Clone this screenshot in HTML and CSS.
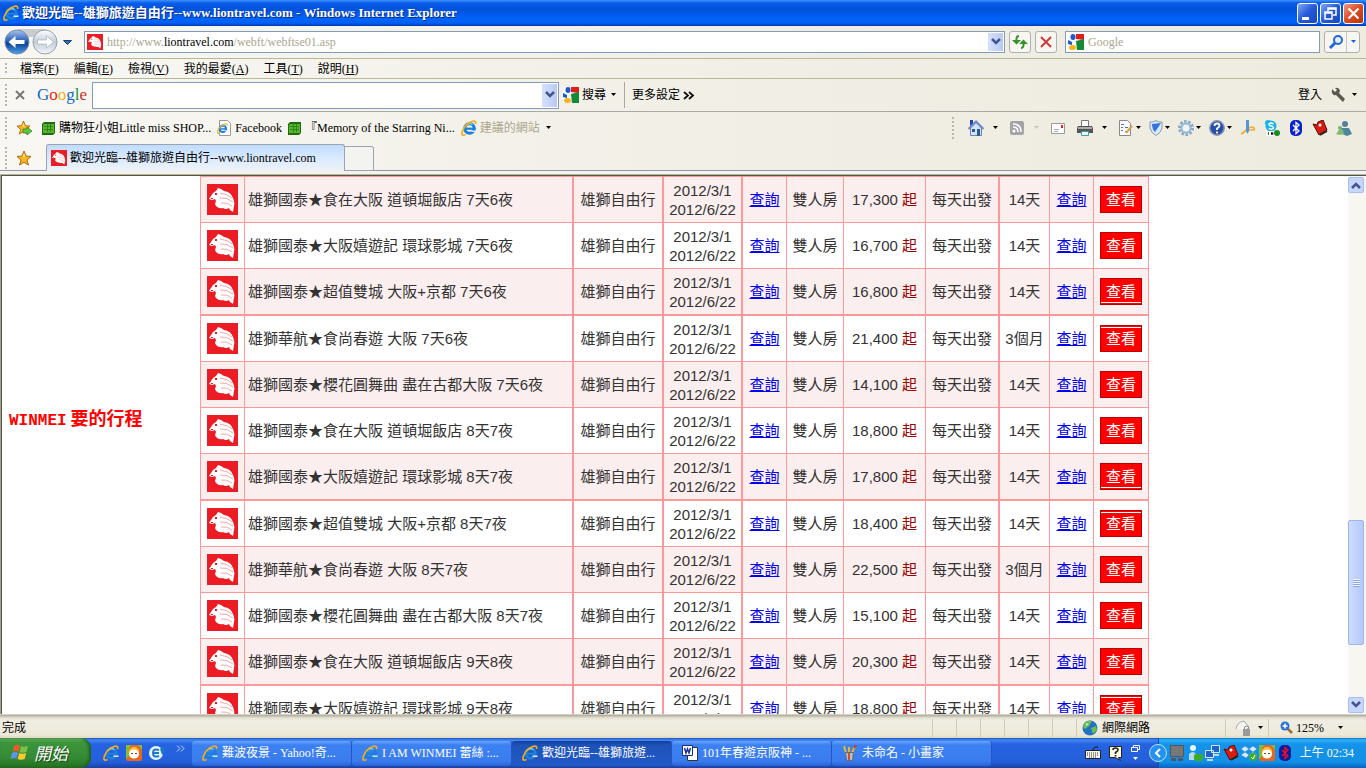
FILE: index.html
```html
<!DOCTYPE html>
<html lang="zh-Hant">
<head>
<meta charset="utf-8">
<title>歡迎光臨--雄獅旅遊自由行--www.liontravel.com</title>
<link rel="stylesheet" href="styles.css">
</head>
<body>
<svg class="defs" width="0" height="0" aria-hidden="true">
  <linearGradient id="blueBall" x1="0" y1="0" x2="0" y2="1"><stop offset="0" stop-color="#a9c6ee"/><stop offset=".45" stop-color="#2a62bd"/><stop offset=".55" stop-color="#0d3f94"/><stop offset="1" stop-color="#4aa6ee"/></linearGradient>
  <linearGradient id="grayBall" x1="0" y1="0" x2="0" y2="1"><stop offset="0" stop-color="#fff"/><stop offset=".5" stop-color="#c3ccd8"/><stop offset="1" stop-color="#f4f8fc"/></linearGradient>
  <symbol id="lion" viewBox="0 0 31 31"><rect width="31" height="31" fill="#ec1c24"/><path fill="#fff" d="M2 15L6 9l3-2 2-3 3 1 3 2q7 1 9 7 2 5 1 8l-1 6-3-2-1-2q-3 2-6 0-4 1-7-2l-1-2 1-3-1-2-3 1-1 3H4l1-3z"/><path fill="none" stroke="#f6a9a4" d="M13 9q8 1 12 5M13 14q7-1 13 4M14 19q6-1 11 3"/><path fill="#ec1c24" d="M8 9h2v2H8zM4 14h2v1H4z"/></symbol>
  <symbol id="ie" viewBox="0 0 16 16"><circle cx="8.500" cy="8.500" r="4.700" fill="none" stroke="#1c7fdc" stroke-width="3"/><path d="M5 8.700h9.500" stroke="#1c7fdc" stroke-width="2.200"/><path d="M10.500 10.500h5v1.500h-5z" fill="#d9eaff"/><path d="M5 5.500Q8 2.500 11.500 4.500" fill="none" stroke="#8fd0ff" stroke-width="1.200"/><path d="M14.500 4Q15.500 0 11 1.500 4 4 1.500 11-.5 16.500 4.500 14.500" fill="none" stroke="#f0ae1c" stroke-width="1.700"/></symbol>
  <symbol id="goog" viewBox="0 0 16 16"><path fill="#f4f8ff" d="M0 0h9v16H0z"/><path fill="#e21b1b" d="M8 0h8v6l-8-1z"/><path fill="#138a36" d="M8 7l8-2v11H9z"/><path fill="#1f58c7" d="M0 6l4 2v3l-4-1z"/><ellipse cx="5" cy="3" rx="2.500" ry="3" fill="#1f58c7"/><ellipse cx="4.500" cy="13.500" rx="3.500" ry="2.500" fill="#f8b414"/></symbol>
  <symbol id="green" viewBox="0 0 13 13"><path fill="#1e6b10" d="M2 0h11v11l-2 2H0V2z"/><path fill="#58b531" d="M2 2h10v9H1V3z"/><path stroke="#2e8518" d="M2 4.500h9M2 7.500h9M5.500 2v8M8.500 2v8"/></symbol>
  <symbol id="star" viewBox="0 0 16 16"><path fill="#fbb81e" stroke="#b06a10" d="M8 1l2 5 5 .5-4 3.500 1.500 5L8 12.300 3.500 15 5 10 1 6.500 6 6z"/><path fill="#ffe792" d="M8 3l1.300 4H6.500z"/></symbol>
  <symbol id="caret" viewBox="0 0 7 4"><path fill="currentColor" d="M1 0h5L3.500 3z"/></symbol>
  <symbol id="chev" viewBox="0 0 10 8"><path d="M1 1l4 4 4-4" fill="none" stroke="#44568a" stroke-width="2.500"/></symbol>
  <symbol id="face" viewBox="0 0 16 16"><rect width="16" height="16" rx="2" fill="#e8671b"/><path fill="#86bb35" d="M0 0h5L3 4v8l-3 2zM12 0h4v5z"/><path fill="#f9bd3c" d="M3 5l3-3h4l3 3v3H3z"/><ellipse cx="8" cy="9" rx="5" ry="4.500" fill="#fff"/><path fill="#742" d="M5 8h2v1H5zM9 8h2v1H9z"/></symbol>
  <symbol id="bt" viewBox="0 0 12 16"><rect width="12" height="16" rx="5" fill="#0a22cf"/><path d="M3 5l6 6-3 2.500v-11L9 5l-6 6" fill="none" stroke="#fff" stroke-width="1.300"/></symbol>
  <symbol id="book" viewBox="0 0 16 16"><path fill="#d91c12" stroke="#5b0a05" d="M1 4l4 1 1-3 5-2 4 10-8 5z"/><path d="M8 15l7-4" stroke="#222" stroke-width="2"/><circle cx="8" cy="5" r="1.500" fill="#fff"/></symbol>
</svg>

<header class="titlebar">
  <svg class="i16"><use href="#ie"/></svg>
  <h1>歡迎光臨--雄獅旅遊自由行--www.liontravel.com - Windows Internet Explorer</h1>
  <div class="winbtns">
    <button aria-label="最小化"><svg viewBox="0 0 19 19"><path fill="#fff" d="M4 13h7v3H4z"/></svg></button>
    <button aria-label="還原"><svg viewBox="0 0 19 19"><path fill="none" stroke="#fff" stroke-width="1.500" d="M7 7V4h8v7h-3M4 8h7v7H4zM4 9h7M7 5h8"/></svg></button>
    <button class="close" aria-label="關閉"><svg viewBox="0 0 19 19"><path stroke="#fff" stroke-width="2.300" d="M4.500 4.500l10 10M14.500 4.500l-10 10"/></svg></button>
  </div>
</header>

<nav class="navrow">
  <svg class="travel" viewBox="0 0 72 30" role="img" aria-label="上一頁 下一頁"><path fill="#c8cbd0" d="M14 2h28v8H14z"/><circle cx="13" cy="15" r="12" fill="url(#blueBall)" stroke="#7c8ba6"/><path fill="#fff" d="M4.500 15l7-6v4h9v4h-9v4z"/><circle cx="41" cy="15" r="12" fill="url(#grayBall)" stroke="#9aa0aa"/><path fill="#fff" stroke="#aab2be" stroke-width=".7" d="M49.500 15l-7-6v4h-9v4h9v4z"/><path fill="#2673b8" stroke="#17406e" d="M59.500 13.500h8l-4 4z"/></svg>
  <div class="field address"><svg class="i16"><use href="#lion"/></svg>
    <div class="url" role="textbox" aria-label="網址" contenteditable="true" spellcheck="false">http://www.<b>liontravel.com</b>/webft/webftse01.asp</div>
    <button class="drop" aria-label="展開網址"><svg width="10" height="8"><use href="#chev"/></svg></button></div>
  <button class="sq" aria-label="重新整理"><svg class="i16" viewBox="0 0 16 16"><path fill="none" stroke="#35912c" stroke-width="2" d="M7 2Q4 2 4.500 7M9 14q3 0 2.500-5"/><path fill="#35912c" d="M0 6h9l-4.500 4.500zM7 10h9l-4.500-4.500z"/></svg></button>
  <button class="sq" aria-label="停止"><svg class="i16" viewBox="0 0 16 16"><path stroke="#d03a35" stroke-width="2" d="M3 3l10 10M13 3L3 13"/></svg></button>
  <div class="field search"><svg class="i16"><use href="#goog"/></svg><input type="text" aria-label="搜尋" placeholder="Google"></div>
  <div class="go"><button aria-label="開始搜尋"><svg class="i16" viewBox="0 0 16 16"><circle cx="10" cy="6" r="4" fill="#e4f0ff" stroke="#2367d8" stroke-width="2"/><path d="M7 9l-5 5" stroke="#2367d8" stroke-width="3"/></svg></button><button class="more" aria-label="搜尋選項"><svg class="caret"><use href="#caret"/></svg></button></div>
</nav>

<nav class="menurow">
  <i class="grip"></i>
  <button>檔案(<u>F</u>)</button><button>編輯(<u>E</u>)</button><button>檢視(<u>V</u>)</button><button>我的最愛(<u>A</u>)</button><button>工具(<u>T</u>)</button><button>說明(<u>H</u>)</button>
</nav>

<div class="googlerow">
  <i class="grip"></i>
  <button class="x" aria-label="關閉工具列"><svg width="10" height="10" viewBox="0 0 10 10"><path stroke="#777" stroke-width="2" d="M1 1l8 8M9 1L1 9"/></svg></button>
  <span class="glogo"><span class="b">G</span><span class="r">o</span><span class="y">o</span><span class="b">g</span><span class="g">l</span><span class="r">e</span></span>
  <div class="field gfield"><input type="text" aria-label="Google 搜尋"><button class="drop" aria-label="展開"><svg width="10" height="8"><use href="#chev"/></svg></button></div>
  <button class="gbtn"><svg class="i16"><use href="#goog"/></svg>搜尋<svg class="caret"><use href="#caret"/></svg></button>
  <i class="vsep"></i>
  <button class="gbtn">更多設定<svg width="12" height="9" viewBox="0 0 12 9"><path d="M1 1l4 3.500L1 8M6 1l4 3.500L6 8" fill="none" stroke="#111" stroke-width="1.800"/></svg></button>
  <button class="push">登入</button>
  <button class="wrench" aria-label="設定"><svg class="i16" viewBox="0 0 16 16"><path fill="#59594f" d="M2 2l3 3 2-2-2-2q4-1 5 3l-1 2 6 6-2 3-7-7Q1 9 2 2z"/></svg><svg class="caret"><use href="#caret"/></svg></button>
</div>

<div class="favrow">
  <i class="grip"></i>
  <button class="addfav" aria-label="新增至我的最愛列"><svg class="i16" viewBox="0 0 16 16"><use href="#star" width="15" height="15"/><path fill="#5fc73b" stroke="#2d7d1a" stroke-width=".7" d="M7 9h4V7l5 4-5 4v-2H7z"/></svg></button>
  <a href="#"><svg class="i13"><use href="#green"/></svg>購物狂小姐Little miss SHOP...</a>
  <a href="#"><svg width="14" height="16" viewBox="0 0 14 16"><path fill="#fff" stroke="#999" d="M2.500.5h8l3 3v12h-11z"/><use href="#ie" x="0" y="3" width="11" height="11"/></svg>Facebook</a>
  <a href="#"><svg class="i13"><use href="#green"/></svg>『Memory of the Starring Ni...</a>
  <a href="#" class="sites"><svg class="i16"><use href="#ie"/></svg>建議的網站<svg class="caret"><use href="#caret"/></svg></a>
  <div class="tools">
    <i class="grip"></i>
    <button class="wide" aria-label="首頁"><svg class="i16" viewBox="0 0 16 16"><path fill="#1e3fae" d="M2 0h3v4L2 6z"/><path fill="#d3e3f6" stroke="#6a83b8" d="M2.500 8L8 2.500 13.500 8v7.500h-11z"/><path fill="none" stroke="#7388c8" stroke-width="2" d="M.5 9L8 1.500 15.500 9"/><path fill="#2e5a8f" d="M9 9h3v7H9zM4 9h3v3H4z"/></svg><svg class="caret"><use href="#caret"/></svg></button>
    <button class="wide dim" aria-label="摘要"><svg class="i16" viewBox="0 0 16 16"><rect x="1" y="1" width="14" height="14" rx="2" fill="#a4a4a4"/><circle cx="5" cy="11" r="1.500" fill="#fff"/><path d="M4 7q5 0 5 5M4 4q8 0 8 8" fill="none" stroke="#fff" stroke-width="1.500"/></svg><svg class="caret"><use href="#caret"/></svg></button>
    <button class="mail" aria-label="郵件"><svg class="i16" viewBox="0 0 16 16"><path fill="#fff" stroke="#999" d="M1.500 3.500h13v10h-13z"/><path fill="#d22" d="M11 5h2v3h-2z"/><path stroke="#aaa" d="M4 9.500h5M4 11.500h4"/></svg></button>
    <button class="wide" aria-label="列印"><svg class="i16" viewBox="0 0 16 16"><path fill="#fff" stroke="#777" d="M4.500.5h7v6h-7z"/><path fill="#555" d="M1 6h14l1 2v5H0V8z"/><path fill="#aaa" d="M1 7h14v2H1z"/><path fill="#e8f8ff" stroke="#49a" d="M4.500 11.500h7v4h-7z"/></svg><svg class="caret"><use href="#caret"/></svg></button>
    <button class="tight" aria-label="網頁"><svg class="i16" viewBox="0 0 16 16"><path fill="#fff" stroke="#888" d="M1.500.5h8l3 3v12h-11z"/><path stroke="#5b6fae" d="M3 4.500h3M3 7.500h2M7 7.500h3M3 10.500h2M7 11.500h2"/><path d="M8 13l6-7" stroke="#d9a243" stroke-width="2"/></svg><svg class="caret"><use href="#caret"/></svg></button>
    <button class="tight" aria-label="安全性"><svg class="i14" viewBox="0 0 14 16"><path fill="#dce9fa" stroke="#8a9cb8" d="M7 .5q3 2 6 1.500v6q-1 5-6 7.500-5-2.500-6-7.500V2q3 .5 6-1.500z"/><path fill="#3274df" d="M3 4l9-1-6 9q-3-3-3-8z"/></svg><svg class="caret"><use href="#caret"/></svg></button>
    <button class="tight" aria-label="工具"><svg class="i16" viewBox="0 0 16 16"><circle cx="8" cy="8" r="6.500" fill="none" stroke="#8fa8c0" stroke-width="3" stroke-dasharray="2.500 1.500"/><circle cx="8" cy="8" r="4.500" fill="#f4f3ec" stroke="#8fbbe0" stroke-width="2"/></svg><svg class="caret"><use href="#caret"/></svg></button>
    <button class="tight" aria-label="說明"><svg class="i16" viewBox="0 0 16 16"><circle cx="8" cy="8" r="7.200" fill="#294ea8" stroke="#8996b6" stroke-width="1.500"/><path d="M5.500 6q0-2.500 2.500-2.500t2.500 2q0 1.500-2.500 3V10M8 11.500v2" fill="none" stroke="#fff" stroke-width="1.800"/></svg><svg class="caret"><use href="#caret"/></svg></button>
    <button class="one" aria-label="編輯"><svg class="i16" viewBox="0 0 16 16"><path d="M1 14q4-2 5-4h7q2 0 1-2-2-2-5 0" fill="none" stroke="#f0ac39" stroke-width="1.700"/><path fill="#5496d8" d="M6 0h3v11l-1.500 3L6 11z"/></svg></button>
    <button class="one" aria-label="Skype"><svg class="i16" viewBox="0 0 16 16"><circle cx="7" cy="6" r="5.500" fill="#19b4ea"/><circle cx="4" cy="3" r="3" fill="#19b4ea"/><path d="M9.500 4Q7 2 5 4q0 2 3 2 3 2 0 3-2 1-3-1" fill="none" stroke="#fff" stroke-width="1.500"/><path fill="#fff" d="M2 11h9v5H2z"/><path stroke="#555" d="M4.500 12v3M7 12.500h2v2H7"/><circle cx="13" cy="13" r="3" fill="#178a24"/></svg></button>
    <button class="one" aria-label="Bluetooth"><svg class="i16"><use href="#bt"/></svg></button>
    <button class="one" aria-label="字典"><svg class="i16"><use href="#book"/></svg></button>
    <button class="one" aria-label="Messenger"><svg class="i16" viewBox="0 0 16 16"><circle cx="9" cy="4" r="3" fill="#567f9e"/><path fill="#4d8698" d="M5 8h8l3 6-5 2-5-2z"/><circle cx="4" cy="8" r="2" fill="#73b56b"/><path fill="#86b976" d="M0 14l3-4h4l1 4-4 1z"/></svg></button>
  </div>
</div>

<div class="tabrow">
  <i class="grip"></i>
  <button class="favstar" aria-label="我的最愛"><svg class="i16"><use href="#star"/></svg></button>
  <button class="tab"><svg class="i16"><use href="#lion"/></svg>歡迎光臨--雄獅旅遊自由行--www.liontravel.com</button>
  <button class="newtab" aria-label="新索引標籤"></button>
</div>

<main class="viewport">
  <div class="page">
    <p class="note">WINMEI<span>要的行程</span></p>
    <table class="tours">
      <colgroup><col class="c-logo"><col class="c-name"><col class="c-type"><col class="c-date"><col class="c-ask"><col class="c-room"><col class="c-price"><col class="c-go"><col class="c-days"><col class="c-link"><col class="c-view"></colgroup>
      <tbody>
      <tr><td><svg class="i31"><use href="#lion"/></svg></td><td class="name">雄獅國泰★食在大阪 道頓堀飯店 7天6夜</td><td>雄獅自由行</td><td>2012/3/1<br>2012/6/22</td><td><a href="#">查詢</a></td><td>雙人房</td><td>17,300 <em>起</em></td><td>每天出發</td><td>14天</td><td><a href="#">查詢</a></td><td><button>查看</button></td></tr>
      <tr><td><svg class="i31"><use href="#lion"/></svg></td><td class="name">雄獅國泰★大阪嬉遊記 環球影城 7天6夜</td><td>雄獅自由行</td><td>2012/3/1<br>2012/6/22</td><td><a href="#">查詢</a></td><td>雙人房</td><td>16,700 <em>起</em></td><td>每天出發</td><td>14天</td><td><a href="#">查詢</a></td><td><button>查看</button></td></tr>
      <tr><td><svg class="i31"><use href="#lion"/></svg></td><td class="name">雄獅國泰★超值雙城 大阪+京都 7天6夜</td><td>雄獅自由行</td><td>2012/3/1<br>2012/6/22</td><td><a href="#">查詢</a></td><td>雙人房</td><td>16,800 <em>起</em></td><td>每天出發</td><td>14天</td><td><a href="#">查詢</a></td><td><button class="low">查看</button></td></tr>
      <tr class="group"><td><svg class="i31"><use href="#lion"/></svg></td><td class="name">雄獅華航★食尚春遊 大阪 7天6夜</td><td>雄獅自由行</td><td>2012/3/1<br>2012/6/22</td><td><a href="#">查詢</a></td><td>雙人房</td><td>21,400 <em>起</em></td><td>每天出發</td><td>3個月</td><td><a href="#">查詢</a></td><td><button class="high">查看</button></td></tr>
      <tr><td><svg class="i31"><use href="#lion"/></svg></td><td class="name">雄獅國泰★櫻花圓舞曲 盡在古都大阪 7天6夜</td><td>雄獅自由行</td><td>2012/3/1<br>2012/6/22</td><td><a href="#">查詢</a></td><td>雙人房</td><td>14,100 <em>起</em></td><td>每天出發</td><td>14天</td><td><a href="#">查詢</a></td><td><button>查看</button></td></tr>
      <tr><td><svg class="i31"><use href="#lion"/></svg></td><td class="name">雄獅國泰★食在大阪 道頓堀飯店 8天7夜</td><td>雄獅自由行</td><td>2012/3/1<br>2012/6/22</td><td><a href="#">查詢</a></td><td>雙人房</td><td>18,800 <em>起</em></td><td>每天出發</td><td>14天</td><td><a href="#">查詢</a></td><td><button>查看</button></td></tr>
      <tr><td><svg class="i31"><use href="#lion"/></svg></td><td class="name">雄獅國泰★大阪嬉遊記 環球影城 8天7夜</td><td>雄獅自由行</td><td>2012/3/1<br>2012/6/22</td><td><a href="#">查詢</a></td><td>雙人房</td><td>17,800 <em>起</em></td><td>每天出發</td><td>14天</td><td><a href="#">查詢</a></td><td><button class="low">查看</button></td></tr>
      <tr class="group"><td><svg class="i31"><use href="#lion"/></svg></td><td class="name">雄獅國泰★超值雙城 大阪+京都 8天7夜</td><td>雄獅自由行</td><td>2012/3/1<br>2012/6/22</td><td><a href="#">查詢</a></td><td>雙人房</td><td>18,400 <em>起</em></td><td>每天出發</td><td>14天</td><td><a href="#">查詢</a></td><td><button class="high">查看</button></td></tr>
      <tr><td><svg class="i31"><use href="#lion"/></svg></td><td class="name">雄獅華航★食尚春遊 大阪 8天7夜</td><td>雄獅自由行</td><td>2012/3/1<br>2012/6/22</td><td><a href="#">查詢</a></td><td>雙人房</td><td>22,500 <em>起</em></td><td>每天出發</td><td>3個月</td><td><a href="#">查詢</a></td><td><button>查看</button></td></tr>
      <tr><td><svg class="i31"><use href="#lion"/></svg></td><td class="name">雄獅國泰★櫻花圓舞曲 盡在古都大阪 8天7夜</td><td>雄獅自由行</td><td>2012/3/1<br>2012/6/22</td><td><a href="#">查詢</a></td><td>雙人房</td><td>15,100 <em>起</em></td><td>每天出發</td><td>14天</td><td><a href="#">查詢</a></td><td><button>查看</button></td></tr>
      <tr><td><svg class="i31"><use href="#lion"/></svg></td><td class="name">雄獅國泰★食在大阪 道頓堀飯店 9天8夜</td><td>雄獅自由行</td><td>2012/3/1<br>2012/6/22</td><td><a href="#">查詢</a></td><td>雙人房</td><td>20,300 <em>起</em></td><td>每天出發</td><td>14天</td><td><a href="#">查詢</a></td><td><button>查看</button></td></tr>
      <tr class="group"><td><svg class="i31"><use href="#lion"/></svg></td><td class="name">雄獅國泰★大阪嬉遊記 環球影城 9天8夜</td><td>雄獅自由行</td><td>2012/3/1<br>2012/6/22</td><td><a href="#">查詢</a></td><td>雙人房</td><td>18,800 <em>起</em></td><td>每天出發</td><td>14天</td><td><a href="#">查詢</a></td><td><button class="high">查看</button></td></tr>
      </tbody>
    </table>
  </div>
  <div class="scroll">
    <button class="up" aria-label="向上捲動"><svg width="10" height="8"><use href="#chev"/></svg></button>
    <div class="track"><div class="before"></div><div class="thumb"><i></i></div><div class="after"></div></div>
    <button aria-label="向下捲動"><svg width="10" height="8"><use href="#chev"/></svg></button>
  </div>
</main>

<footer class="status">
  <span class="done">完成</span>
  <div class="cells"><i></i><i></i><i></i><i></i><i></i><i></i></div>
  <div class="zone"><svg class="i16" viewBox="0 0 16 16"><circle cx="8" cy="8" r="7.500" fill="#2271c4"/><path fill="#6cbf4a" d="M3 2q4-2 7-1L7 6l-4 3-2-2zM9 8l5-2 1 4-4 4z"/><path fill="#bfe3f7" d="M4 3l3 1-3 2z"/></svg>網際網路</div>
  <div class="protect"><svg class="i16" viewBox="0 0 16 16"><path fill="#f4f4f0" stroke="#aaa" d="M1 9q1-7 8-8l5 6-3 3"/><path fill="#999" d="M8 9h7v7H8z"/><path d="M9.500 9V7q2-2 4 0v2" fill="none" stroke="#888"/></svg><svg class="caret"><use href="#caret"/></svg></div>
  <button class="zoom"><svg class="i13" viewBox="0 0 13 13"><path d="M8 8l4 4" stroke="#a66a2c" stroke-width="2.500"/><circle cx="5" cy="5" r="4.500" fill="#2873cf"/><path stroke="#fff" stroke-width="1.500" d="M2.500 5h5M5 2.500v5"/></svg>125%<svg class="caret"><use href="#caret"/></svg></button>
</footer>

<div class="taskbar">
  <button class="start"><svg width="20" height="18" viewBox="0 0 20 18"><path fill="#ec5c2a" d="M4 2q3-2 6-.5L8.500 7.500Q5 6.500 2.500 8z"/><path fill="#7dc142" d="M11 2q3 1.500 7 0L16.500 8q-4 1.500-7 0z"/><path fill="#5c92ee" d="M2 9q3-1.500 6-.5L6.500 14.500q-3-1-6 .5z"/><path fill="#fbc92d" d="M9.200 9q3 1.500 7 0l-1.500 6q-4 1.500-7 0z"/></svg>開始</button>
  <div class="quick">
    <svg class="i16"><use href="#ie"/></svg><svg class="i16"><use href="#face"/></svg>
    <svg class="i16" viewBox="0 0 16 16"><circle cx="7" cy="8" r="7" fill="#e8f4ff"/><path d="M10 5q-6-2-6 3t6 3M5 8h5" fill="none" stroke="#1c78c8" stroke-width="2"/><path fill="#1c78c8" d="M11 4l3-3 2 5-3 4z"/></svg>
    <svg class="more" width="9" height="7" viewBox="0 0 9 7"><path d="M1 .5l3 3-3 3M5 .5l3 3-3 3" fill="none" stroke="#c5dbff"/></svg>
  </div>
  <div class="tasks">
    <button><svg class="i16"><use href="#ie"/></svg><span>難波夜景 - Yahoo!奇...</span></button>
    <button><svg class="i16"><use href="#ie"/></svg><span>I AM WINMEI 蕾絲 :...</span></button>
    <button class="on"><svg class="i16"><use href="#ie"/></svg><span>歡迎光臨--雄獅旅遊...</span></button>
    <button><svg class="i16" viewBox="0 0 16 16"><path fill="#fff" stroke="#333" d="M5.500 2.500h10v13h-10z"/><path fill="#fff" stroke="#1b2f7d" d="M.5.500h10v10H.5z"/><path d="M2.500 3l1.500 5 1.500-4L7 8l1.500-5" fill="none" stroke="#1b2f9d" stroke-width="1.500"/></svg><span>101年春遊京阪神 - ...</span></button>
    <button><svg class="i16" viewBox="0 0 16 16"><path d="M4 8L2 1M7 8V2M10 8l3-7" stroke="#e9b52b" stroke-width="2"/><path d="M12 3l2-3" stroke="#d4331d" stroke-width="2"/><path fill="#b5bfc4" stroke="#667" d="M3.500 7.500h8l-1 8h-6z"/><path fill="#c9512e" d="M6 8h2v7H6z"/></svg><span>未命名 - 小畫家</span></button>
  </div>
  <div class="lang">
    <svg class="i16" viewBox="0 0 16 16"><path d="M8 5q0-3 5-3" stroke="#111" fill="none"/><path fill="#f4f2e6" stroke="#222" d="M.5 5.500h15v8H.5z"/><path stroke="#333" stroke-dasharray="1 1" d="M2 8h12M2 10h12M4 12h8"/></svg>
    <svg class="i16" viewBox="0 0 16 16"><path fill="#fffbe0" stroke="#222" d="M1.500 1.500h12v11h-3l2 3-5-3h-6z"/><path d="M5 5q0-2 2.500-2T10 5q0 1-2.500 2.500V9M7.500 10v1.500" fill="none" stroke="#222" stroke-width="1.600"/></svg>
    <svg width="9" height="16" viewBox="0 0 9 16"><path fill="none" stroke="#fff" d="M2.500 2V.5h6v4H7M.5 2.500h6v4h-6z"/><path fill="#fff" d="M2 12h5l-2.500 3z"/></svg>
  </div>
  <div class="tray">
    <button class="hide" aria-label="隱藏圖示"><svg width="18" height="18" viewBox="0 0 18 18"><circle cx="9" cy="9" r="8.500" fill="#2292ee" stroke="#bfe0ff"/><path d="M11 5L7 9l4 4" fill="none" stroke="#fff" stroke-width="2"/></svg></button>
    <svg class="i16" viewBox="0 0 16 16"><path fill="#777" stroke="#555" d="M1.500.5h13v11h-13z"/><path fill="#555" d="M2 13h5v3H2zM9 13h5v3H9z"/></svg>
    <svg class="i16" viewBox="0 0 16 16"><circle cx="6" cy="3" r="3" fill="#eaf4fc"/><path fill="#b9d9ee" d="M2 15V9q4-4 7 0v6z"/><rect x="7" y="9" width="9" height="7" rx="2" fill="#3bab2c"/></svg>
    <svg class="i16" viewBox="0 0 16 16"><path fill="#1e62c9" stroke="#d5e6f7" d="M6.500.5h8v7h-8zM.5 5.500h8v7h-8z"/><path fill="#c3d2df" d="M9 9h5v2H9zM2 14h6v2H2z"/></svg>
    <svg class="i16"><use href="#book"/></svg>
    <svg class="i16" viewBox="0 0 16 16"><path fill="#d7ecff" stroke="#3c8fd6" stroke-width=".6" d="M4 1l4 3-4 3-4-3zM12 1l4 3-4 3-4-3zM4 7l4 3-3 3-5-3zM12 7l4 3-5 3-3-3z"/><circle cx="12" cy="12" r="4" fill="#3cae2c"/><path d="M10 12l2 2 2-4" fill="none" stroke="#fff"/></svg>
    <svg class="i16"><use href="#face"/></svg>
    <svg class="i16" viewBox="0 0 12 16"><rect width="12" height="16" rx="5" fill="#0a1a9f"/><path d="M3 5l6 6-3 2.500v-11L9 5l-6 6" fill="none" stroke="#e12" stroke-width="1.300"/></svg>
    <time>上午 02:34</time>
  </div>
</div>
</body>
</html>
```
FILE: styles.css
```css
* { box-sizing: border-box; }
body {
  margin: 0; height: 100vh; overflow: hidden; display: flex; flex-direction: column;
  font: 12px/16px "Liberation Serif", "Noto Sans CJK TC", serif; color: #000; background: #f1efe6;
}
button, input { font: inherit; color: inherit; border: 0; padding: 0; margin: 0; background: none; }
button { display: inline-flex; align-items: center; white-space: nowrap; }
a { color: inherit; text-decoration: none; }
svg { flex: none; display: block; }
.defs { position: absolute; }
.i16 { width: 16px; height: 16px; }
.i14 { width: 14px; height: 16px; }
.i13 { width: 13px; height: 13px; }
.i31 { width: 31px; height: 31px; margin: 0 auto; }
.caret { width: 7px; height: 4px; }
.grip { flex: none; width: 2px; height: 22px; background: repeating-linear-gradient(#b9b6a4 0 2px, transparent 2px 4px); }

.titlebar {
  flex: none; height: 26px; padding: 0 2px 0 3px; display: flex; align-items: center; gap: 3px;
  background: linear-gradient(#3f93ff 0, #0a5cea 3px, #0052dc 10px, #0064fb 20px, #0060f4 23px, #0038b4);
}
h1 { margin: 0; flex: 1; font-size: 13px; line-height: 18px; font-weight: 700; color: #fff; text-shadow: 1px 1px #0a2a80; white-space: nowrap; overflow: hidden; }
.winbtns { display: flex; gap: 2px; }
.winbtns button { width: 21px; height: 21px; border: 1px solid #fff; border-radius: 3px; background: linear-gradient(135deg, #7fa6f4, #2459d8 50%, #1a48c0); }
.winbtns .close { background: linear-gradient(135deg, #f09a80, #dc4a22 50%, #b83208); }
.winbtns svg { width: 19px; height: 19px; }

.navrow, .menurow, .googlerow, .favrow, .tabrow { flex: none; display: flex; align-items: center; background: linear-gradient(to right, #f8f7f3, #f1efe6 50%, #eeebdf); }
.navrow { height: 33px; padding: 0 6px 0 4px; border-bottom: 1px solid #b9b795; }
.travel { width: 72px; height: 30px; margin-right: 8px; }
.field { display: flex; align-items: center; height: 22px; border: 1px solid #7f9db9; background: #fff; }
.address { flex: 1; padding: 0 1px 0 2px; gap: 4px; margin-right: 4px; }
.url { flex: 1; color: #aca68d; outline: 0; white-space: nowrap; overflow: hidden; }
.url b { font-weight: 400; color: #000; }
.drop { width: 15px; height: 18px; justify-content: center; background: linear-gradient(90deg, #d5e1fd, #b8c9f5); }
.sq { width: 22px; height: 22px; justify-content: center; border: 1px solid #aeb0b4; border-radius: 3px; background: #f7f6f1; margin-right: 4px; }
.search { width: 255px; padding: 0 2px; gap: 4px; margin: 0 4px; }
.search input, .gfield input { flex: 1; min-width: 0; outline: 0; }
.search input::placeholder { color: #aca68d; opacity: 1; }
.go { display: flex; height: 22px; border: 1px solid #aeb0b4; border-radius: 3px; background: #f7f6f1; }
.go button { width: 21px; justify-content: center; }
.go .more { width: 13px; border-left: 1px solid #c6c6c2; color: #1463d8; }

.menurow { height: 20px; padding-left: 5px; gap: 15px; border-bottom: 1px solid #b9b795; }
.menurow .grip { height: 12px; margin-right: -2px; }
.googlerow { height: 33px; padding: 0 8px 0 5px; border-bottom: 1px solid #a9a9a4; }
.googlerow .x { margin: 0 12px 0 8px; }
.glogo { font-size: 17px; line-height: 24px; width: 55px; }
.glogo .b { color: #1467c8; } .glogo .r { color: #d92a22; } .glogo .y { color: #eeb211; } .glogo .g { color: #159a43; }
.gfield { width: 467px; height: 27px; padding: 0 1px; margin-right: 4px; }
.gfield .drop { height: 23px; }
.gbtn { gap: 3px; }
.gbtn .caret { margin-left: 1px; }
.vsep { width: 1px; height: 26px; background: #aaa89c; margin: 0 7px; }
.push { margin-left: auto; margin-right: 8px; }
.wrench { gap: 5px; }

.favrow { height: 32px; padding: 0 14px 0 5px; }
.favrow > a { display: flex; align-items: center; gap: 4px; margin-right: 6px; white-space: nowrap; }
.addfav, .favstar { margin: 0 10px 0 9px; }
.favrow > .sites { color: #aca68d; gap: 3px; }
.sites .caret { color: #000; margin-left: 2px; }
.tools { margin-left: auto; display: flex; align-items: center; }
.tools .grip { margin-right: 14px; }
.wide { gap: 8px; margin-right: 10px; }
.dim .caret { color: #c8c6ba; }
.mail { margin-right: 11px; }
.tight { gap: 1px; margin-right: 7px; }
.one { margin-right: 8px; }
.one:last-child { margin-right: 0; }

.tabrow { height: 30px; padding: 0 0 3px 5px; align-items: stretch; background: linear-gradient(to top, #f4f3ee 3px, #8d97a8 3px, #8d97a8 4px, transparent 4px), linear-gradient(to right, #f8f7f3, #f1efe6 50%, #eeebdf); }
.tabrow .grip { align-self: center; }
.favstar { margin-right: 14px; }
.tab { width: 299px; padding: 2px 4px; gap: 3px; border: 1px solid #9aa3b2; border-bottom: 0; border-radius: 3px 3px 0 0; background: linear-gradient(#bfdcff, #d9eaff 50%, #eef3f8); }
.newtab { width: 29px; margin-top: 2px; border: 1px solid #9aa3b2; border-left: 0; border-radius: 0 3px 0 0; background: #f3f3f0; }

.viewport { flex: 1; min-height: 0; display: flex; background: #fff; border-top: 1px solid #b9b795; border-left: 1px solid #a5a38a; overflow: hidden; }
.page { flex: 1; min-width: 0; display: grid; grid-template-columns: 198px 1fr; align-items: start; border-top: 1px solid #55544c; border-left: 1px solid #55544c; }
.note { margin: 231px 0 0 7px; color: #f00; font: 700 16px/20px "Liberation Mono", monospace; white-space: nowrap; }
.note span { font: 700 18px/20px "Noto Sans CJK TC", sans-serif; margin-left: 4px; }
.tours { table-layout: fixed; width: 949px; border-collapse: separate; border-spacing: 0; border-right: 1px solid #f99; font: 15px/19px "Liberation Sans", "Noto Sans CJK TC", sans-serif; color: #333; }
.tours td { height: 46px; padding: 0; border-top: 1px solid #f99; border-left: 1px solid #f99; text-align: center; white-space: nowrap; }
.tours .group td { height: 47px; border-top-width: 2px; }
.tours td:nth-child(3), .tours td:nth-child(4), .tours td:nth-child(5), .tours td:nth-child(9) { border-left-width: 2px; }
.tours tr:nth-child(odd) td { background: #fbeeee; }
.tours .name { text-align: left; padding-left: 3px; }
.tours a { color: #00e; text-decoration: underline; }
.tours em { font-style: normal; color: #900; }
.tours button { width: 42px; height: 27px; justify-content: center; color: #fff; background: #f00; border: 1px solid #b00; vertical-align: middle; }
.tours .low { box-shadow: inset 0 -1px #f00, inset 0 -2px #fff; }
.tours .high { box-shadow: inset 0 1px #f00, inset 0 2px #fff; }
.c-logo, .c-link { width: 44px; }
.c-name { width: 328px; }
.c-type { width: 90px; }
.c-date { width: 79px; }
.c-ask { width: 45px; }
.c-room { width: 57px; }
.c-price { width: 82px; }
.c-go { width: 73px; }
.c-days { width: 51px; }
.c-view { width: 55px; }

.scroll { flex: none; width: 18px; padding: 1px 2px 1px 0; display: flex; flex-direction: column; background: #f7f6f0; border-top: 1px solid #55544c; }
.scroll > button { height: 16px; justify-content: center; border: 1px solid #a9bdf0; border-radius: 2px; background: #c6d6fc; }
.scroll .up svg { transform: rotate(180deg); }
.track { flex: 1; display: flex; flex-direction: column; padding: 1px 0; }
.before { flex: 328; }
.thumb { flex: 124; display: flex; align-items: center; justify-content: center; border: 1px solid #9db6ec; border-radius: 2px; background: linear-gradient(to right, #cddcfe, #b5c9f8); }
.thumb i { width: 7px; height: 8px; background: repeating-linear-gradient(#f2f7ff 0 1px, #8ba8e4 1px 2px); }
.after { flex: 51; }

.status { flex: none; height: 24px; display: flex; align-items: center; padding: 2px 16px 0 2px; border-top: 1px solid #d4d1c2; background: linear-gradient(#aaa99a 0, #e6e3d3 3px, #f0eee3 6px, #ece9d8 20px, #dcd8c0); }
.done { flex: 1; }
.cells { display: flex; }
.cells i { width: 24px; height: 18px; border-left: 1px solid #cfccba; }
.zone, .protect, .zoom { display: flex; align-items: center; height: 18px; border-left: 1px solid #cfccba; }
.zone { gap: 4px; width: 149px; padding-left: 5px; }
.protect { gap: 6px; width: 43px; padding-left: 9px; }
.zoom { gap: 3px; padding-left: 11px; }
.zoom .caret { margin: 0 6px 0 10px; }

.taskbar { flex: none; height: 30px; display: flex; align-items: center; color: #fff; background: linear-gradient(#1c50c0 0, #4088f4 2px, #2663e0 6px, #245edb 24px, #1941a5); }
.start { width: 91px; height: 30px; padding-left: 10px; gap: 4px; border-radius: 0 10px 10px 0; font: italic 17px/24px "Noto Sans CJK TC", sans-serif; text-shadow: 1px 1px 1px #123f12; background: linear-gradient(#6bb56b 0, #3c963c 4px, #348a34 20px, #23701f); box-shadow: inset -2px 0 3px #1d5c1d; }
.quick { width: 101px; padding-left: 12px; display: flex; align-items: center; gap: 7px; }
.quick .more { margin: 0 0 10px 4px; }
.tasks { flex: 1; min-width: 0; display: flex; }
.tasks button { flex: 0 1 160px; min-width: 0; height: 25px; padding: 0 10px; gap: 4px; border-radius: 3px; background: linear-gradient(#6aa4fb, #3c81f3 4px, #3a7cee 20px, #2a62d4); border-right: 1px solid #2356c4; }
.tasks span { overflow: hidden; }
.tasks .on { background: linear-gradient(#163f9c, #1e52b7 4px, #2259c8); }
.lang { display: flex; align-items: center; gap: 7px; margin-right: 18px; }
.tray { display: flex; align-items: center; gap: 2px; height: 30px; padding-right: 12px; border-left: 1px solid #0a4ca8; background: linear-gradient(#0d78d4 0, #30b0f6 2px, #1593ea 6px, #1290e8 24px, #0a62c0); }
.hide { margin-left: -10px; }
.tray time { margin-left: 5px; white-space: nowrap; font-size: 12px; }
```
